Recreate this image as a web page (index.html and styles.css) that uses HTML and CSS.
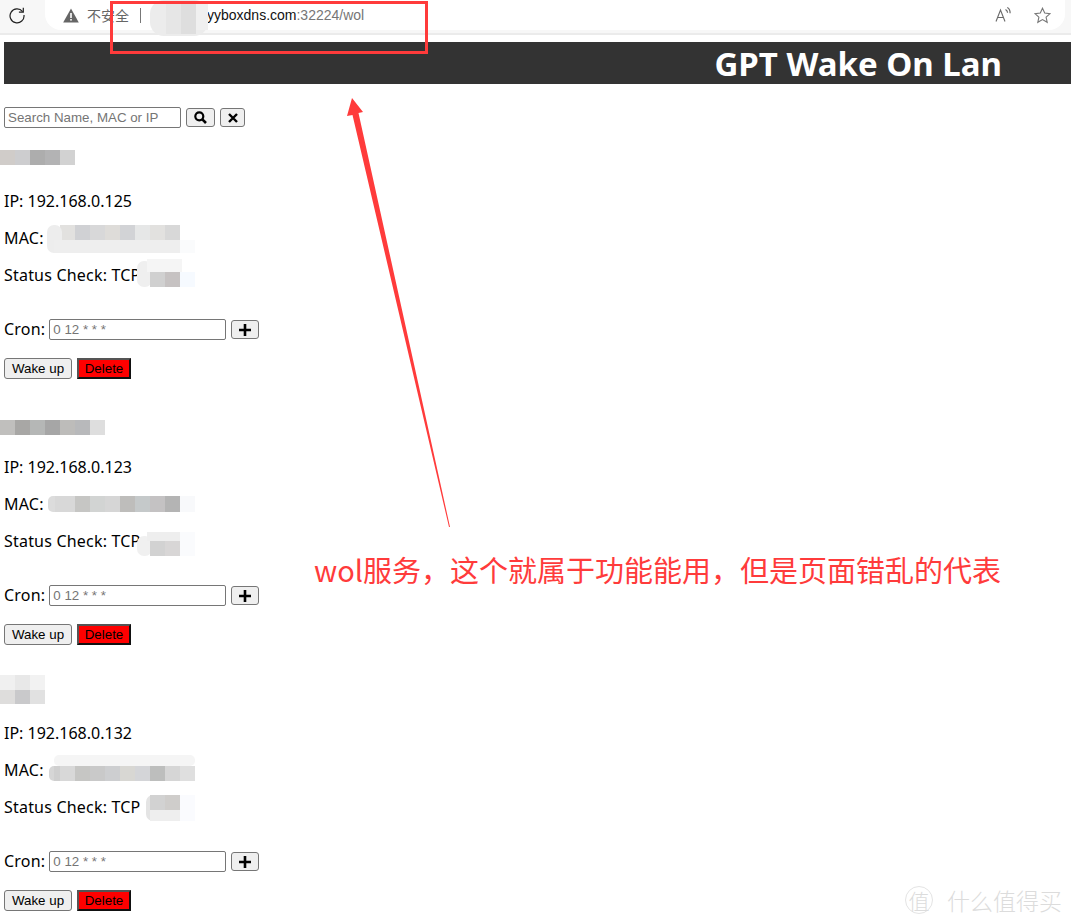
FILE: index.html
```html
<!DOCTYPE html>
<html lang="en">
  <head>
    <meta charset="UTF-8" />
    <meta name="viewport" content="width=device-width, initial-scale=1.0" />
    <title>GPT Wake On Lan</title>
    <link rel="stylesheet" href="styles.css">
  </head>
  <body>
    <div class="browser-bar">
      <svg class="reload" width="18" height="18" viewBox="0 0 18 18"><path d="M14.6 5.6A7 7 0 1 0 16 9" fill="none" stroke="#222" stroke-width="1.2"/><path d="M15.3 1.8v4.4h-4.4" fill="none" stroke="#222" stroke-width="1.2"/></svg>
      <div class="address">
        <svg class="warn" width="16" height="15" viewBox="0 0 16 15"><path d="M8 0.5 15.8 14.5H0.2Z" fill="#666"/><rect x="7.2" y="5" width="1.6" height="5" fill="#fff"/><rect x="7.2" y="11" width="1.6" height="1.6" fill="#fff"/></svg>
        <span class="insecure">不安全</span>
        <span class="divider"></span>
        <span class="url"><span class="url-host">yyboxdns.com</span>:32224/wol</span>
        <svg class="read-aloud" width="18" height="18" viewBox="0 0 18 18"><path d="M2 15.500 6.500 4l4.500 11.500M3.600 11.500h5.800" fill="none" stroke="#6a6a6a" stroke-width="1.100"/><path d="M11.500 3.500c1.300.7 2 1.800 2.100 3.300M13.300 1.500c1.800 1 2.900 3 2.800 5.800" fill="none" stroke="#6a6a6a" stroke-width="1.200"/></svg>
        <svg class="star" width="17" height="17" viewBox="0 0 17 17"><path d="M8.500 1.200 10.700 6l5.300.600-3.900 3.500 1.100 5.200-4.700-2.700-4.700 2.700 1.100-5.200L1 6.600 6.300 6Z" fill="none" stroke="#777" stroke-width="1.100"/></svg>
      </div>
    </div>

    <div class="page">
      <header class="banner">
        <h1>GPT Wake On Lan</h1>
      </header>

      <form class="search">
        <input type="text" class="search-input" placeholder="Search Name, MAC or IP" />
        <button type="button" class="icon-btn search-btn">
          <svg width="13" height="13" viewBox="0 0 13 13"><circle cx="5.300" cy="5.300" r="4" fill="none" stroke="#000" stroke-width="2.200"/><path d="M8.300 8.300 12 12" stroke="#000" stroke-width="2.600"/></svg>
        </button>
        <button type="button" class="icon-btn clear-btn">
          <svg width="10" height="10" viewBox="0 0 10 10"><path d="M1 1 9 9M9 1 1 9" stroke="#000" stroke-width="2.400"/></svg>
        </button>
      </form>

      <section class="device">
        <h3 class="device-name">
          <svg class="mosaic" width="75" height="15"><rect width="15" height="15" fill="#d0ccc9"/><rect x="15" width="15" height="15" fill="#cdcdcf"/><rect x="30" width="15" height="15" fill="#adadad"/><rect x="45" width="15" height="15" fill="#b3b3b4"/><rect x="60" width="15" height="15" fill="#d2d2d2"/></svg>
        </h3>
        <p>IP: 192.168.0.125</p>
        <p class="masked">MAC:
          <svg class="blur mac-one" width="150" height="28"><rect x="15" width="120" height="15" fill="#e2e1df"/><rect x="30" width="15" height="15" fill="#d0d1d4"/><rect x="45" width="15" height="15" fill="#d8d8d9"/><rect x="60" width="15" height="15" fill="#dedcd9"/><rect x="75" width="15" height="15" fill="#d2d3d6"/><rect x="90" width="15" height="15" fill="#e6e7e7"/><rect x="120" width="15" height="15" fill="#d8d8d8"/><rect x="2" y="0" width="15" height="28" rx="7" fill="#ededed"/><rect x="9" y="15" width="126" height="13" fill="#eeeeee"/><rect x="135" y="15" width="15" height="13" fill="#fafbfc"/></svg>
        </p>
        <p class="masked">Status Check: TCP
          <svg class="blur status-one" width="60" height="28"><rect x="0" y="2" width="15" height="26" rx="7" fill="#efefef"/><rect x="10" width="35" height="13" fill="#f5f5f5"/><rect x="13" y="13" width="15" height="15" fill="#d0d0d0"/><rect x="28" y="13" width="15" height="15" fill="#c6c2c2"/><rect x="43" y="13" width="15" height="15" fill="#f6faff"/></svg>
        </p>
        <div class="cron">
          <label>Cron:</label>
          <input type="text" class="cron-input" placeholder="0 12 * * *" />
          <button type="button" class="icon-btn add-btn">
            <svg width="12" height="12" viewBox="0 0 12 12"><path d="M6 0v12M0 6h12" stroke="#000" stroke-width="2.600"/></svg>
          </button>
        </div>
        <div class="actions">
          <button type="button" class="wake-btn">Wake up</button>
          <button type="button" class="delete-btn">Delete</button>
        </div>
      </section>

      <section class="device">
        <h3 class="device-name">
          <svg class="mosaic name-two" width="105" height="15"><rect width="15" height="15" fill="#c0bfbd"/><rect x="15" width="15" height="15" fill="#a8a7a5"/><rect x="30" width="15" height="15" fill="#b5b7b6"/><rect x="45" width="15" height="15" fill="#a6a6a6"/><rect x="60" width="15" height="15" fill="#bdbcba"/><rect x="75" width="15" height="15" fill="#b8b9bb"/><rect x="90" width="15" height="15" fill="#dedede"/></svg>
        </h3>
        <p>IP: 192.168.0.123</p>
        <p class="masked">MAC:
          <svg class="blur mac-two" width="150" height="16"><rect x="3" width="15" height="16" rx="5" fill="#dcdcdc"/><rect x="10" width="20" height="16" fill="#d8d8d8"/><rect x="30" width="15" height="16" fill="#c6c6c4"/><rect x="45" width="15" height="16" fill="#d2d4d3"/><rect x="60" width="15" height="16" fill="#d6d6d6"/><rect x="75" width="15" height="16" fill="#bebdbb"/><rect x="90" width="15" height="16" fill="#c5c9ca"/><rect x="105" width="15" height="16" fill="#c4c2c3"/><rect x="120" width="15" height="16" fill="#b4b4b4"/><rect x="135" width="15" height="16" fill="#f8f9fb"/></svg>
        </p>
        <p class="masked">Status Check: TCP
          <svg class="blur status-two" width="60" height="24"><rect x="0" y="4" width="15" height="20" rx="7" fill="#f0f0f0"/><rect x="10" width="35" height="9" fill="#eeeeee"/><rect x="13" y="9" width="15" height="15" fill="#d2d2d2"/><rect x="28" y="9" width="15" height="15" fill="#d8d6d6"/><rect x="43" width="15" height="24" fill="#fafbfd"/></svg>
        </p>
        <div class="cron">
          <label>Cron:</label>
          <input type="text" class="cron-input" placeholder="0 12 * * *" />
          <button type="button" class="icon-btn add-btn">
            <svg width="12" height="12" viewBox="0 0 12 12"><path d="M6 0v12M0 6h12" stroke="#000" stroke-width="2.600"/></svg>
          </button>
        </div>
        <div class="actions">
          <button type="button" class="wake-btn">Wake up</button>
          <button type="button" class="delete-btn">Delete</button>
        </div>
      </section>

      <section class="device">
        <h3 class="device-name">
          <svg class="mosaic name-three" width="45" height="29"><rect width="15" height="15" fill="#f0f0f0"/><rect x="15" width="15" height="15" fill="#e8e8e8"/><rect x="30" width="15" height="15" fill="#f2f2f2"/><rect y="15" width="15" height="14" fill="#dedddc"/><rect x="15" y="15" width="15" height="14" fill="#c9c9cb"/><rect x="30" y="15" width="15" height="14" fill="#e1e1e1"/></svg>
        </h3>
        <p>IP: 192.168.0.132</p>
        <p class="masked">MAC:
          <svg class="blur mac-three" width="146" height="26"><rect x="5" width="141" height="11" rx="5" fill="#f5f5f5"/><rect x="0" y="11" width="10" height="15" rx="5" fill="#d6d6d6"/><rect x="5" y="11" width="6" height="15" fill="#cfcfcf"/><rect x="11" y="11" width="15" height="15" fill="#d8d8d8"/><rect x="26" y="11" width="15" height="15" fill="#c6c6c4"/><rect x="41" y="11" width="15" height="15" fill="#c9c9c9"/><rect x="56" y="11" width="15" height="15" fill="#cdced0"/><rect x="71" y="11" width="15" height="15" fill="#d8d7d3"/><rect x="86" y="11" width="15" height="15" fill="#d4d5d8"/><rect x="101" y="11" width="15" height="15" fill="#bdbebd"/><rect x="116" y="11" width="15" height="15" fill="#d6d6d6"/><rect x="131" y="11" width="15" height="15" fill="#dfdfdf"/></svg>
        </p>
        <p class="masked">Status Check: TCP
          <svg class="blur status-three" width="49" height="26"><rect x="0" y="0" width="15" height="26" rx="7" fill="#e4e4e4"/><rect x="4" width="15" height="15" fill="#d2d2d2"/><rect x="19" width="15" height="15" fill="#cfcdcb"/><rect x="4" y="15" width="30" height="11" fill="#eeeeee"/><rect x="34" width="15" height="26" fill="#fafbfe"/></svg>
        </p>
        <div class="cron">
          <label>Cron:</label>
          <input type="text" class="cron-input" placeholder="0 12 * * *" />
          <button type="button" class="icon-btn add-btn">
            <svg width="12" height="12" viewBox="0 0 12 12"><path d="M6 0v12M0 6h12" stroke="#000" stroke-width="2.600"/></svg>
          </button>
        </div>
        <div class="actions">
          <button type="button" class="wake-btn">Wake up</button>
          <button type="button" class="delete-btn">Delete</button>
        </div>
      </section>
    </div>

    <!-- annotations drawn over the screenshot -->
    <svg class="url-mosaic" width="58" height="36"><rect x="0" y="0" width="58" height="36" rx="14" fill="#ececec"/><rect x="16" y="4" width="15" height="30" fill="#e6e6e6"/><rect x="31" y="4" width="15" height="30" fill="#dedede"/><rect x="46" y="4" width="12" height="26" fill="#f0f0f0"/></svg>
    <div class="callout-box"></div>
    <svg class="callout-arrow" width="120" height="440" viewBox="340 90 120 440"><path d="M352 98 363 112 358.500 113 450 527 449 527 352.500 115 347 116Z" fill="#ff3b3b"/></svg>
    <p class="callout-text">wol服务，这个就属于功能能用，但是页面错乱的代表</p>
    <div class="watermark">
      <span class="watermark-logo">值</span>
      <span>什么值得买</span>
    </div>
  </body>
</html>
```

FILE: styles.css
```css
html,
body {
  height: 100%;
}
body {
  margin: 0;
  position: relative;
  overflow: hidden;
  background: white;
  color: #000;
  font-family: "Noto Sans", sans-serif;
  font-size: 16px;
}

/* browser chrome */
.browser-bar {
  display: flex;
  align-items: flex-start;
  height: 33px;
  padding-left: 8px;
  background: #f7f7f7;
  border-bottom: 2px solid #ebebeb;
  box-sizing: content-box;
}
.reload {
  margin-top: 6px;
}
.address {
  display: flex;
  align-items: center;
  flex: 1;
  height: 30px;
  margin-left: 19px;
  margin-right: 6px;
  padding: 0 14px 0 18px;
  background: white;
  border-radius: 0 0 16px 16px;
  font-family: "Liberation Sans", "Noto Sans CJK SC", sans-serif;
  font-size: 14px;
}
.insecure {
  margin-left: 8px;
  color: #666;
  font-family: "Noto Sans CJK SC", sans-serif;
}
.divider {
  width: 1px;
  height: 15px;
  margin-left: 11px;
  background: #777;
}
.url {
  margin-left: 66px;
  color: #767676;
}
.url-host {
  color: #111;
}
.read-aloud {
  margin-left: auto;
}
.star {
  margin-left: 22px;
}

/* page */
.page {
  padding: 7px 0 0 4px;
}
.banner {
  display: flex;
  justify-content: flex-end;
  align-items: center;
  height: 42px;
  padding-right: 69px;
  background: #333;
}
.banner h1 {
  margin: 0;
  color: white;
  font-size: 33px;
  font-weight: 700;
}
.search {
  display: flex;
  align-items: center;
  gap: 5px;
  height: 21px;
  margin-top: 23px;
}
input {
  box-sizing: border-box;
  height: 21px;
  padding: 1px 2px 1px 3px;
  border: 1px solid #767676;
  border-radius: 2px;
  font-family: "Liberation Sans", sans-serif;
  font-size: 13.33px;
}
.search-input {
  width: 177px;
}
.icon-btn,
.wake-btn {
  box-sizing: border-box;
  border: 1px solid #767676;
  border-radius: 3px;
  background: #efefef;
  padding: 0;
}
.icon-btn {
  display: flex;
  align-items: center;
  justify-content: center;
  height: 19px;
}
.search-btn {
  width: 29px;
}
.clear-btn {
  width: 25px;
}
.add-btn {
  width: 28px;
}

/* device cards */
.device {
  height: 266px;
}
.device-name {
  height: 15px;
  margin: 0;
  margin-left: -4px;
  padding-top: 22px;
}
.mosaic {
  display: block;
}
.name-two {
  margin-top: 4px;
}
.name-three {
  margin-top: -7px;
}
.device p {
  position: relative;
  height: 21px;
  margin: 16px 0;
  line-height: 21px;
}
.device-name + p {
  margin-top: 26px;
}
.device .masked,
.cron label {
  letter-spacing: 0.2px;
}
.blur {
  position: absolute;
}
.mac-one {
  left: 41px;
  top: -3px;
}
.status-one {
  left: 133px;
  top: -6px;
}
.mac-two {
  left: 41px;
  top: 2px;
}
.status-two {
  left: 133px;
  top: 1px;
}
.mac-three {
  left: 45px;
  top: -5px;
}
.status-three {
  left: 142px;
  top: -2px;
}
.cron {
  display: flex;
  align-items: center;
  margin-top: 33px;
  height: 21px;
}
.cron label {
  margin-right: 4px;
  margin-bottom: 2px;
}
.cron-input {
  width: 177px;
}
.cron .add-btn {
  margin-left: 5px;
}
.actions {
  display: flex;
  gap: 5px;
  margin-top: 18px;
}
.actions button {
  height: 21px;
  font-family: "Liberation Sans", sans-serif;
  font-size: 13.33px;
  color: #000;
}
.wake-btn {
  width: 68px;
}
.delete-btn {
  box-sizing: border-box;
  width: 54px;
  padding: 0;
  background: red;
  border: 2px solid;
  border-color: #555 #111 #111 #555;
}

/* annotations */
.url-mosaic {
  position: absolute;
  left: 150px;
  top: 0;
}
.callout-box {
  position: absolute;
  left: 110px;
  top: 1px;
  width: 312px;
  height: 47px;
  border: 3px solid #ff3b3b;
}
.callout-arrow {
  position: absolute;
  left: 340px;
  top: 90px;
}
.callout-text {
  position: absolute;
  left: 314px;
  top: 548px;
  margin: 0;
  color: #ff3b3b;
  font-family: "Noto Sans CJK SC", sans-serif;
  font-size: 29px;
  white-space: nowrap;
}
.watermark {
  position: absolute;
  left: 905px;
  top: 883px;
  display: flex;
  align-items: center;
  gap: 14px;
  color: #dcdcdc;
  font-family: "Noto Sans CJK SC", sans-serif;
  font-size: 23px;
  font-weight: 300;
}
.watermark-logo {
  width: 26px;
  height: 26px;
  border: 1px solid #e4e4e4;
  border-radius: 50%;
  text-align: center;
  line-height: 26px;
  font-size: 21px;
}
```
